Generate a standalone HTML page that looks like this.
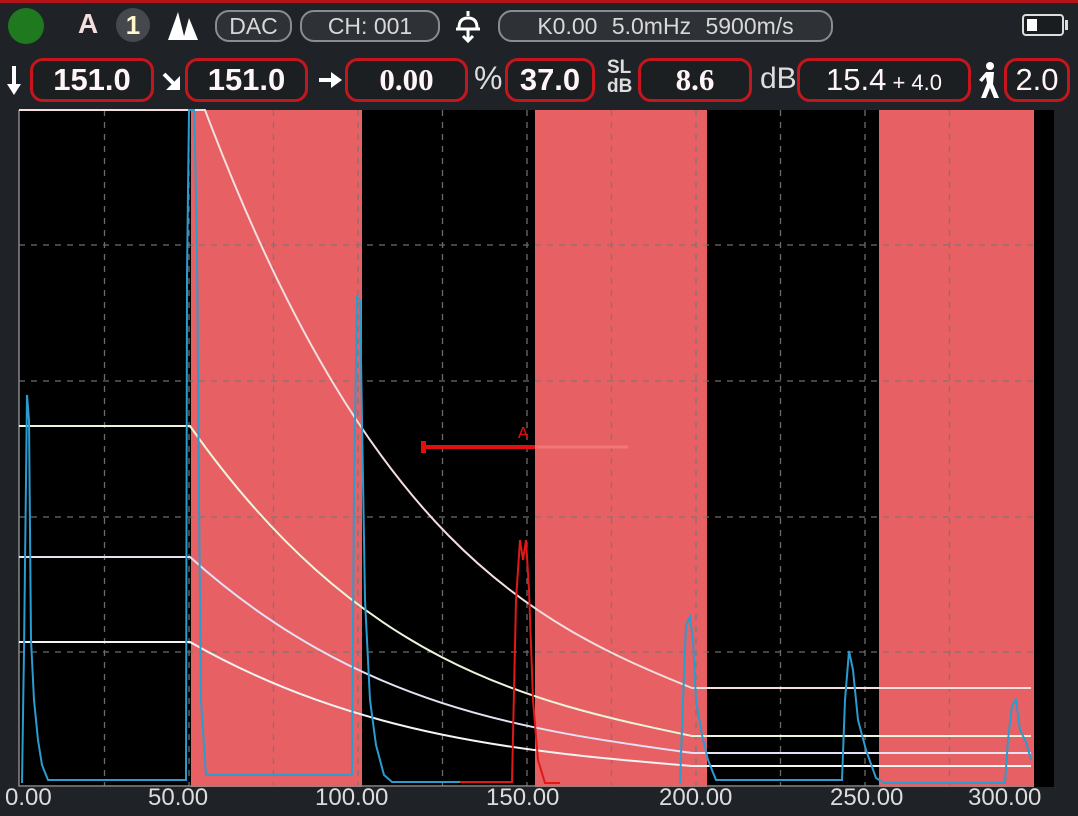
<!DOCTYPE html>
<html><head><meta charset="utf-8"><style>
html,body{margin:0;padding:0;width:1078px;height:816px;overflow:hidden;background:#1f2327;font-family:"Liberation Sans",sans-serif;}
.a{position:absolute}
.pill{position:absolute;border:2px solid #8a8d90;border-radius:14px;background:#2e3236;color:#d8d8d8;font-size:23px;line-height:28px;text-align:center;box-sizing:border-box;height:32px;top:10px}
.box{position:absolute;top:58px;height:44px;border:3px solid #c4161c;border-radius:13px;background:#1c1f22;box-sizing:border-box;color:#fff4f6;text-align:center;font-weight:bold;font-size:31px;line-height:38px}
.lbl{position:absolute;top:784px;color:#dcdcdc;font-size:24px}
</style></head><body>
<div class="a" style="left:0;top:0;width:1078px;height:3px;background:#b3141a"></div>
<div class="a" style="left:8px;top:8px;width:36px;height:36px;border-radius:50%;background:#1f7a1f"></div>
<div class="a" style="left:78px;top:8px;color:#f6dede;font-weight:bold;font-size:28px">A</div>
<div class="a" style="left:116px;top:8px;width:34px;height:34px;border-radius:50%;background:#45494d;color:#fff6cc;font-weight:bold;font-size:26px;text-align:center;line-height:34px">1</div>
<svg class="a" style="left:166px;top:8px" width="34" height="34"><polygon points="2,32 12,4 19,32" fill="#fff"/><polygon points="17,32 23,10 32,32" fill="#fff"/></svg>
<div class="pill" style="left:215px;width:77px">DAC</div>
<div class="pill" style="left:300px;width:140px">CH: 001</div>
<svg class="a" style="left:453px;top:8px" width="30" height="36" fill="none" stroke="#fff" stroke-width="3"><path d="M15 3v5M6 20q0-10 9-10q9 0 9 10M3 21h24M15 21v12M10 28l5 5l5-5"/></svg>
<div class="pill" style="left:498px;width:335px;word-spacing:8px">K0.00 5.0mHz 5900m/s</div>
<div class="a" style="left:1022px;top:14px;width:42px;height:22px;border:2px solid #ddd;border-radius:4px;box-sizing:border-box;background:#1a1d20"><div style="position:absolute;left:3px;top:3px;width:10px;height:12px;background:#fff"></div></div>
<div class="a" style="left:1065px;top:20px;width:3px;height:10px;background:#ddd"></div>

<svg class="a" style="left:4px;top:62px" width="20" height="36"><path d="M10 4v22" stroke="#fff" stroke-width="4"/><polygon points="3,22 17,22 10,33" fill="#fff"/></svg>
<div class="box" style="left:30px;width:124px">151.0</div>
<svg class="a" style="left:160px;top:66px" width="24" height="28"><path d="M4 8l12 12" stroke="#fff" stroke-width="4"/><polygon points="20,10 20,24 6,24" fill="#fff"/></svg>
<div class="box" style="left:185px;width:123px">151.0</div>
<svg class="a" style="left:316px;top:66px" width="28" height="28"><path d="M3 14h16" stroke="#fff" stroke-width="4"/><polygon points="15,6 26,14 15,22" fill="#fff"/></svg>
<div class="box" style="left:345px;width:123px;font-family:'Liberation Serif',serif">0.00</div>
<div class="a" style="left:474px;top:60px;color:#ddd;font-size:32px">%</div>
<div class="box" style="left:505px;width:90px">37.0</div>
<div class="a" style="left:607px;top:58px;color:#ddd;font-size:19px;line-height:19px;font-weight:bold">SL<br>dB</div>
<div class="box" style="left:638px;width:114px;font-family:'Liberation Serif',serif">8.6</div>
<div class="a" style="left:760px;top:62px;color:#ddd;font-size:30px">dB</div>
<div class="box" style="left:797px;width:174px;font-weight:normal">15.4<span style="font-size:22px"> + 4.0</span></div>
<svg class="a" style="left:975px;top:60px" width="28" height="40" fill="#fff"><circle cx="15" cy="6" r="4"/><path d="M11 12h8l-1 12l6 14h-5l-4-10l-4 10h-5l6-15l-1-6l-4 5l-3-2z"/></svg>
<div class="box" style="left:1004px;width:66px;font-weight:normal">2.0</div>

<svg class="a" style="left:0;top:0" width="1078" height="816">
<rect x="19" y="110" width="1035" height="677" fill="#000"/>
<g fill="#e66064"><rect x="191" y="110" width="171" height="677"/><rect x="535" y="110" width="172" height="677"/><rect x="879" y="110" width="155" height="677"/></g>
<g stroke="#777" stroke-width="1.3" stroke-dasharray="6,6" opacity="0.9">
<path d="M104.5 110V786M189 110V786M273.5 110V786M358 110V786M442.5 110V786M527 110V786M611.5 110V786M696 110V786M780.5 110V786M865 110V786M949.5 110V786"/>
<path d="M19 245H1034M19 381H1034M19 517H1034M19 652H1034"/>
</g>
<path d="M19 110V786H1034" stroke="#888" stroke-width="1.5" fill="none"/>
<g fill="none" stroke-width="2">
<path d="M19 110H205C367 539 530 623 692 688H1031" stroke="#f4dede"/>
<path d="M19 426H190C357 663 525 701 692 736H1031" stroke="#eaf6dc"/>
<path d="M19 557H190C357 707 525 730 692 753H1031" stroke="#e4e0f6"/>
<path d="M19 642H190C357 737 525 752 692 766H1031" stroke="#f4f4f4"/>
</g>
<g fill="none" stroke="#2a9cd0" stroke-width="2">
<path d="M22 783L24 650L27 395L29 420L31 640L34 700L38 740L42 765L48 780H186L187 275L189 110L194 110L195 145L197 250L199 500L201 700L206 775H352L354 490L357 297L360 300L362 420L365 600L370 700L376 745L384 775L392 782H460"/>
<path d="M680 783L683 700L686 625L690 617L693 640L696 700L702 735L708 760L716 780H842L845 700L849 651L853 670L858 720L866 750L876 778L884 783H1005L1008 740L1012 705L1016 700L1020 730L1026 742L1031 760"/>
</g>
<path d="M460 782H512L516 600L520 540L523 560L526 540L529 590L533 700L538 760L545 783H560" fill="none" stroke="#e01818" stroke-width="2"/>
<path d="M424 447H535" stroke="#e01010" stroke-width="4"/>
<path d="M535 447H628" stroke="#f27878" stroke-width="3"/>
<rect x="421" y="441" width="5" height="12" fill="#e01010"/>
<text x="518" y="438" fill="#e01010" font-family="Liberation Mono,monospace" font-size="17">A</text>
</svg>
<div class="lbl" style="left:5px">0.00</div>
<div class="lbl" style="left:148px">50.00</div>
<div class="lbl" style="left:315px">100.00</div>
<div class="lbl" style="left:486px">150.00</div>
<div class="lbl" style="left:659px">200.00</div>
<div class="lbl" style="left:830px">250.00</div>
<div class="lbl" style="left:968px">300.00</div>
</body></html>
